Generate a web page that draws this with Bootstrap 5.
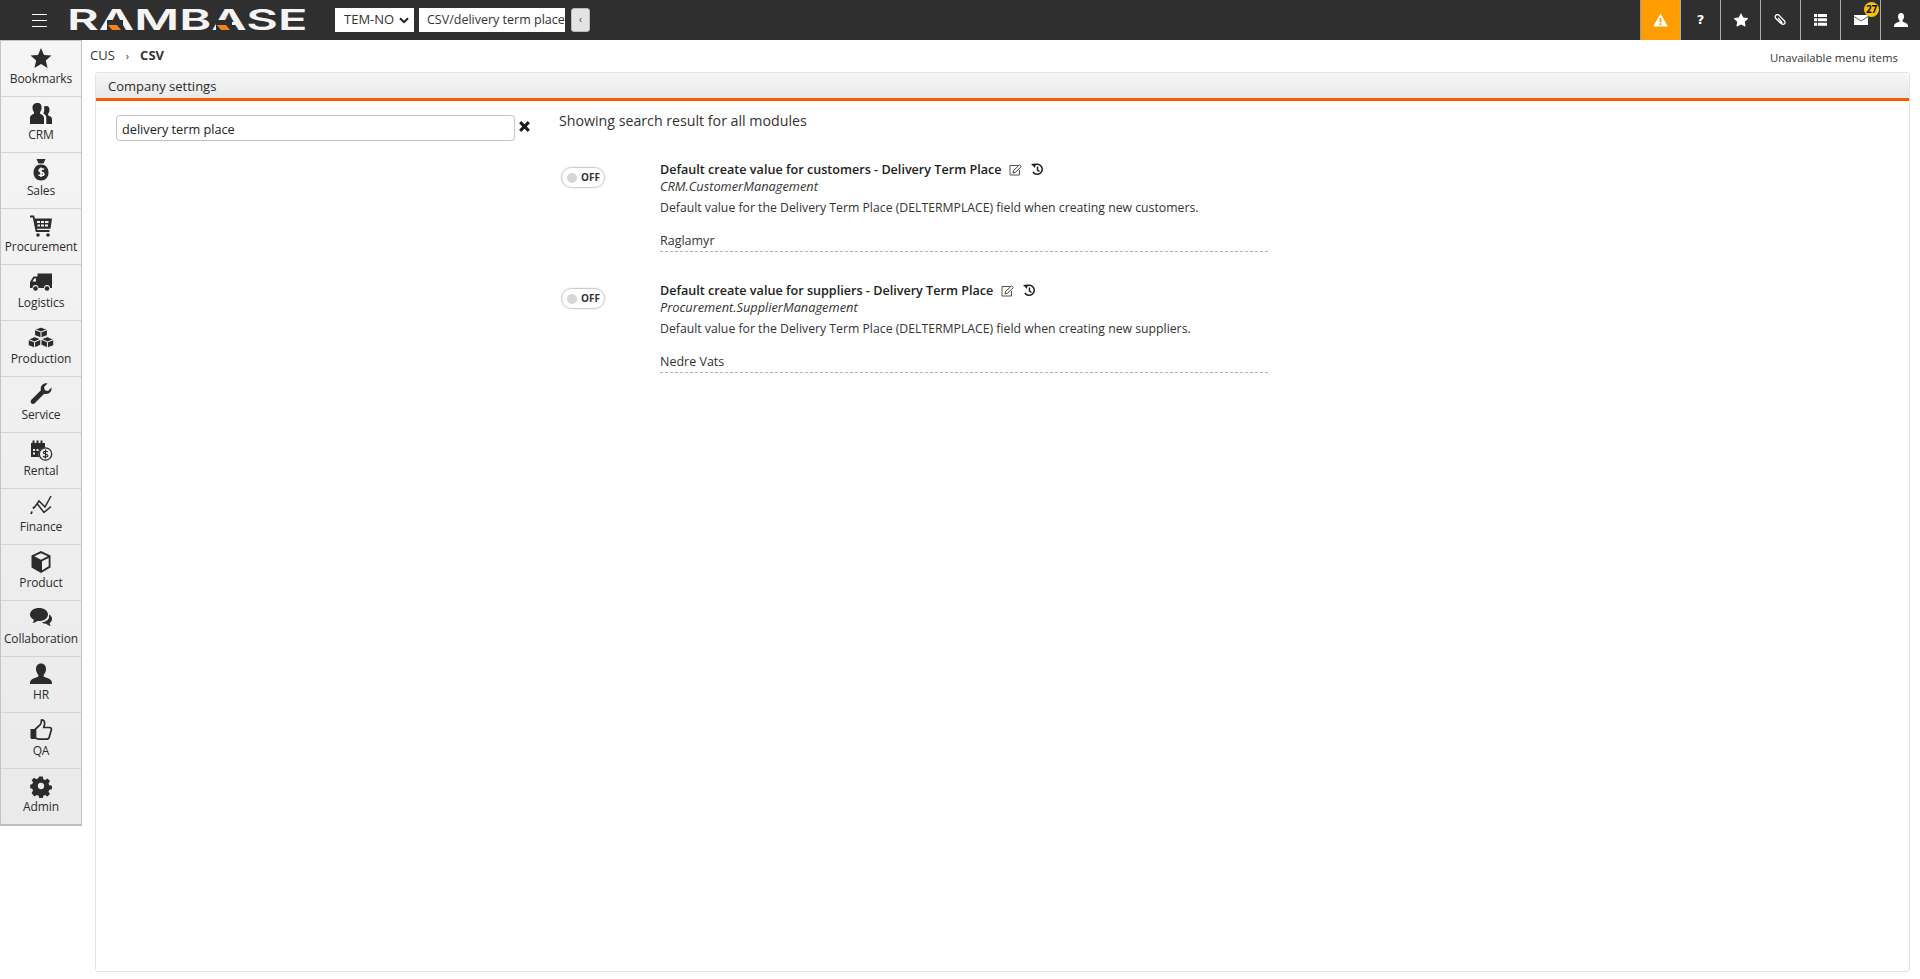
<!DOCTYPE html>
<html lang="en">
<head>
<meta charset="utf-8">
<title>RamBase</title>
<link href="https://cdn.jsdelivr.net/npm/bootstrap@5.3.0/dist/css/bootstrap.min.css" rel="stylesheet">
<style>
html,body{height:100%;overflow:hidden}
body{font-family:"Open Sans","Noto Sans",sans-serif;font-size:13px;color:#2b2b2b;background:#fff}
.shell{height:979px}
.topbar{height:40px;background:#2f2f2f;flex:none}
.burger{width:15px;margin-left:32px;margin-right:20px;flex:none}
.burger span{display:block;height:1px;background:#fff;margin-bottom:5px}
.burger span:last-child{margin-bottom:0}
.brand{position:relative;width:239px;height:22px;flex:none}
.brand-word{display:block;font-family:"Inter",sans-serif;font-weight:600;font-size:29px;line-height:22px;color:#f4f4f4;transform-origin:0 50%;transform:scaleX(1.68);white-space:nowrap}
.brand-mark{position:absolute;top:11px;width:16px;height:10px;background:#2f2f2f}
.brand-mark::after{content:"";position:absolute;left:3px;top:5px;width:9px;height:5px;background:#f58220;transform:skewX(40deg)}
.tenant{width:79px;height:24px;margin-left:29px;background:#fff;font-size:13px;color:#333;padding:0 0 0 9px;display:flex;align-items:center;justify-content:space-between;flex:none}
.tenant svg{margin-right:5px}
.crumbbox{width:146px;height:24px;margin-left:5px;background:#fff;color:#333;font-size:12.5px;padding-left:8px;line-height:24px;overflow:hidden;white-space:nowrap;flex:none}
.collapse-btn{width:19px;height:24px;margin-left:6px;background:#e4e4e4;border:1px solid #bbb;border-radius:3px;color:#444;font-size:10px;line-height:20px;text-align:center;flex:none}
.tool{width:40px;height:40px;border-left:1px solid #b0aaa6;display:flex;align-items:center;justify-content:center;position:relative;flex:none}
.tool-alert{background:#ff9d00;border-left-color:#999}
.tool-badge{position:absolute;top:2px;left:23px;width:15px;height:15px;border-radius:50%;background:#f4c20d;color:#111;font-size:10px;font-weight:700;line-height:15px;text-align:center;letter-spacing:-.3px}
.sidenav{width:82px;flex:none;align-self:flex-start;background:linear-gradient(#f5f5f5,#eaeaea);border-top:1px solid #c4c4c4;border-left:1px solid #c4c4c4;border-right:1px solid #c4c4c4;border-bottom:2px solid #bdbdbd}
.sideitem{height:56px;display:flex;flex-direction:column;align-items:center;color:#2b2b2b;font-size:12px;line-height:16px;padding-top:5px;border-bottom:1px solid #d4d4d4;text-decoration:none;letter-spacing:-.1px}
.sideitem:last-child{border-bottom:0;height:55px}
.sideitem svg{width:24px;height:24px;flex:none;margin-bottom:1px}
.sideitem svg.widen{width:28px}
.workspace{min-width:0}
.crumbs{height:32px;padding:6px 22px 0 8px;font-size:13px;color:#333}
.crumbs .sep{margin:0 11px;font-size:11px}
.crumbs .other{font-size:11.4px;margin-top:3px}
.panel{margin:0 10px 7px 13px;border:1px solid #e4e4e4;border-radius:3px;height:900px}
.panel-head{height:28px;background:linear-gradient(#f6f6f6,#e9e9e9);border-bottom:3px solid #f55b00;padding:4px 12px;font-size:13px;color:#2b2b2b;line-height:19px;border-radius:3px 3px 0 0}
.searchcol{width:463px;padding:14px 0 0 20px;flex:none}
.searchbox{width:399px;height:26px;border:1px solid #c2c2c2;border-radius:4px;padding:0 5px;font-size:12.7px;line-height:26px;color:#222}
.clearx{margin-left:3px;margin-top:5px}
.results{padding-top:10px;min-width:0}
.results-title{font-size:14.2px;line-height:20px;color:#333;margin-bottom:30px}
.setting{margin-bottom:30px}
.switcher{width:44px;height:21px;border:1px solid #ccc;border-radius:11px;margin:6px 0 0 2px;flex:none;display:flex;align-items:center;padding-left:5px;gap:4px;font-size:10px;font-weight:700;color:#333;box-shadow:0 0 2px #ddd}
.switcher i{display:block;width:10px;height:10px;border-radius:50%;background:#d6d6d6}
.setting-body{margin-left:55px;width:608px}
.setting-title{font-weight:600;font-size:12.6px;line-height:17px;color:#222}
.setting-title svg{margin-left:4px;vertical-align:-2px}
.setting-title svg.redo{margin-left:6px}
.setting-mod{font-style:italic;font-size:12.8px;line-height:17px;color:#333}
.setting-desc{font-size:12.25px;line-height:17px;color:#333;margin-top:4px}
.setting-val{font-size:12.5px;line-height:19px;color:#333;margin-top:15px;border-bottom:1px dashed #b0b0b0;height:21px}
</style>
</head>
<body>
<div class="shell d-flex flex-column">
  <header class="topbar d-flex align-items-center">
    <div class="burger"><span></span><span></span><span></span></div>
    <div class="brand">
      <span class="brand-word">RAMBASE</span>
      <i class="brand-mark" style="left:40px"></i>
      <i class="brand-mark" style="left:149px"></i>
    </div>
    <div class="tenant"><span>TEM-NO</span><svg width="10" height="7" viewBox="0 0 10 7"><path d="M1 1.2l4 4 4-4" fill="none" stroke="#222" stroke-width="2"/></svg></div>
    <div class="crumbbox">CSV/delivery term place</div>
    <div class="collapse-btn">&#8249;</div>
    <div class="ms-auto d-flex">
      <div class="tool tool-alert"><svg width="15" height="14" viewBox="0 0 16 15"><path fill-rule="evenodd" fill="#fff" d="M8 0.5 15.8 14.5H0.2zM7 5v5h2V5zM7 11v2h2v-2z"/></svg></div>
      <div class="tool"><span class="text-white fw-bold" style="font-size:13px;font-family:'DejaVu Sans',sans-serif">?</span></div>
      <div class="tool"><svg width="14" height="14" viewBox="0 0 16 16"><path fill="#fff" d="M3.612 15.443c-.386.198-.824-.149-.746-.592l.83-4.73L.173 6.765c-.329-.314-.158-.888.283-.95l4.898-.696L7.538.792c.197-.39.73-.39.927 0l2.184 4.327 4.898.696c.441.062.612.636.282.95l-3.522 3.356.83 4.73c.078.443-.36.79-.746.592L8 13.187l-4.389 2.256z"/></svg></div>
      <div class="tool"><svg width="13" height="13" viewBox="0 0 14 14"><path d="M3 5.500 7.500 10c1 1 2.800 1.500 3.800.6s.7-2.400-.2-3.300L5.500 1.500C4.500.5 2.900.5 2 1.400s-1 2.400 0 3.400L7 9.800c.5.500 1.100.5 1.400.2s.3-.9-.2-1.400L4.500 4.300" fill="none" stroke="#fff" stroke-width="1.400"/></svg></div>
      <div class="tool"><svg width="13" height="12" viewBox="0 0 13 12"><path fill="#fff" d="M0 0h3v3H0zM3.800 0H13v3H3.800zM0 4.300h3v3H0zM3.800 4.300H13v3H3.800zM0 8.700h3v3H0zM3.800 8.700H13v3H3.800z"/></svg></div>
      <div class="tool"><svg width="14" height="10" viewBox="0 0 14 10"><path fill="#fff" d="M0 0h14v10H0z"/><path fill="none" stroke="#2f2f2f" stroke-width=".8" d="M0 1.500 7 6l7-4.500"/></svg><span class="tool-badge">27</span></div>
      <div class="tool"><svg width="14" height="14" viewBox="0 0 14 14"><path fill="#fff" d="M7 0c2 0 3 1.500 3 3.500 0 1.500-.6 3-1.500 3.800v1.200C10 9.500 14 10 14 13v1H0v-1c0-3 4-3.500 5.500-4.500V7.300C4.600 6.500 4 5 4 3.500 4 1.500 5 0 7 0z"/></svg></div>
    </div>
  </header>
  <div class="d-flex flex-grow-1" style="min-height:0">
    <nav class="sidenav">
      <a class="sideitem"><svg viewBox="0 0 24 24"><path fill="#2b2b2b" d="M12 2l3 7 7.500.6-5.700 4.900 1.800 7.400L12 18l-6.600 3.900 1.800-7.400L1.500 9.600 9 9z"/></svg>Bookmarks</a>
      <a class="sideitem"><svg viewBox="0 0 24 24"><path fill="#2b2b2b" d="M9 1c2.500 0 3.600 2 3.600 4.500 0 2-.7 3.700-1.600 4.600v1.500c1.500 1.200 4 1.700 4 4.500V22H1v-5.900c0-2.800 2.500-3.300 4-4.500v-1.500C4.100 9.200 3.500 7.500 3.500 5.500 3.500 3 5 1 9 1zM17.500 4c2 0 3 1.700 3 3.700 0 1.700-.6 3.200-1.400 4v1.500c1.300 1 3.900 1.400 3.900 3.800V22h-5.700v-6c0-2.500-1.700-3.500-3-4.400 .8-1.500 1-3 1-4.500 0-1.100-.2-2-.5-2.500.6-.4 1.700-.6 2.700-.6z"/></svg>CRM</a>
      <a class="sideitem"><svg viewBox="0 0 24 24"><path fill="#2b2b2b" d="M7.500 1h9l-2 4.500h-5z"/><path fill="#2b2b2b" fill-rule="evenodd" d="M12 6.500c4.500 0 7.500 3.500 7.500 8s-3 8-7.500 8-7.500-3.500-7.500-8 3-8 7.500-8z"/><path fill="none" stroke="#fff" stroke-width="1.500" d="M15 11.500c-.8-1-4.500-1.500-5 .6-.4 2.200 5 1.400 5 3.900 0 2-4 2-5.500.7M12 9.500v9.500"/></svg>Sales</a>
      <a class="sideitem"><svg viewBox="0 0 24 24"><path fill="none" stroke="#2b2b2b" stroke-width="1.800" d="M1 2.500h3.500L7.500 17h13"/><path fill="#2b2b2b" d="M5.500 4.500H23l-1.500 10.300H7.500zM8 7v2h3V7zM12 7v2h3V7zM16 7v2h3.500V7zM8.500 10.500v2H11v-2zM12 10.500v2h3v-2zM16 10.500v2h3v-2z" fill-rule="evenodd"/><circle cx="9" cy="21" r="1.800" fill="#2b2b2b"/><circle cx="19" cy="21" r="1.800" fill="#2b2b2b"/></svg>Procurement</a>
      <a class="sideitem"><svg viewBox="0 0 24 24"><path fill="#2b2b2b" fill-rule="evenodd" d="M8.500 3.500H23V18h-2a3 3 0 0 0-6 0H9.500a3 3 0 0 0-6 0H1v-6l3.500-5.500h4zM3.500 11.500H7V8.500H5.200z"/><circle cx="6.500" cy="18.500" r="2.300" fill="#2b2b2b"/><circle cx="18" cy="18.500" r="2.300" fill="#2b2b2b"/></svg>Logistics</a>
      <a class="sideitem"><svg class="widen" viewBox="0 0 24 24" preserveAspectRatio="none"><g stroke="#f0f0f0" stroke-width=".9" fill="#2b2b2b"><path d="M12 1l5.500 2.500v6L12 12 6.500 9.500v-6z"/><path d="M6.500 10.500 12 13v6l-5.500 3L1 19.500v-6z"/><path d="M17.500 10.500 23 13.500v6L17.500 22 12 19v-6z"/><path fill="none" d="M6.500 3.500 12 6l5.500-2.500M12 6v6M1 13.500l5.500 2.500 5.500-3M6.500 16v6M12 13l5.500 3 5.500-2.500M17.500 16v6"/></g></svg>Production</a>
      <a class="sideitem"><svg viewBox="0 0 24 24"><path fill="#2b2b2b" d="M22.500 5.500c.5 3-1.500 6.500-5.500 6.500-.8 0-1.300-.1-1.800-.3L6 21c-1.200 1.200-2.800 1.200-3.700.3s-.9-2.500.3-3.700l9.300-9.300c-.3-1-.3-2-.1-2.800C12.500 2.500 15.500.8 18.500 1.500l-3.500 3.500.8 3.300 3.200.7z"/></svg>Service</a>
      <a class="sideitem"><svg viewBox="0 0 24 24"><path fill="#2b2b2b" d="M2 5h1.500V2.500h2V5h2V2.500h2V5h2V2.500h2V5H16v4.500a7 7 0 0 0-6 9.500H2zM4 11h2v2H4zM7.500 11h2v2h-2zM4 14.500h2v2H4z" fill-rule="evenodd"/><circle cx="16.500" cy="16" r="6.200" fill="none" stroke="#2b2b2b" stroke-width="1.300"/><path fill="none" stroke="#2b2b2b" stroke-width="1.200" d="M18.800 14c-.8-1-4.300-1.200-4.500.5-.2 2 4.700 1 4.600 3.300-.1 1.500-3.600 1.500-4.900.4M16.500 11.500v9"/></svg>Rental</a>
      <a class="sideitem"><svg viewBox="0 0 24 24"><path fill="none" stroke="#2b2b2b" stroke-width="1.500" d="M5 14 10 7l6 6 6-11M8 9.500l7 9 7-6"/><path fill="none" stroke="#2b2b2b" stroke-width="1.800" d="M2 20l1-2.500M4 14.500 5 13"/></svg>Finance</a>
      <a class="sideitem"><svg viewBox="0 0 24 24"><path fill="#2b2b2b" fill-rule="evenodd" d="M12 1l9.500 4.500v12L12 23l-9.500-5.500v-12zM12 3.200 5.300 6.300 12 9.700l6.700-3.400zM13 11.300v8.900l6.700-3.900V8z"/></svg>Product</a>
      <a class="sideitem"><svg viewBox="0 0 24 24"><path fill="#2b2b2b" d="M10 2c5 0 9 2.700 9 6.500S15 15 10 15c-.7 0-1.200 0-1.800-.1C7 16 5.500 16.700 3.500 17c.8-.9 1.300-2 1.400-3.200C2.600 12.700 1 10.800 1 8.500 1 4.700 5 2 10 2z"/><path fill="#2b2b2b" d="M20 8.500c2 1 3 2.500 3 4.500 0 1.700-1 3.200-2.300 4 0 1.300.5 2.300 1.300 3-2-.2-3.500-1-4.500-2.300-1.800 0-3.400-.5-4.500-1.500 4.500-.3 8-3 7-7.700z"/></svg>Collaboration</a>
      <a class="sideitem"><svg viewBox="0 0 24 24"><path fill="#2b2b2b" d="M12 1.500c3.300 0 5 2.400 5 5.500 0 2.300-1 4.500-2.300 5.700v1.800c2 1.300 8.300 2 8.300 6.500v1H1v-1c0-4.500 6.300-5.200 8.300-6.500v-1.800C8 11.500 7 9.300 7 7c0-3.100 1.700-5.500 5-5.500z"/></svg>HR</a>
      <a class="sideitem"><svg viewBox="0 0 24 24"><path fill="#2b2b2b" d="M1.500 11H6v10H3c-1 0-1.500-.6-1.500-1.500z"/><path fill="none" stroke="#2b2b2b" stroke-width="1.700" d="M6.500 11 11 7c1.200-1.500 1.500-3 1.500-5 2.500-.5 3.500 2 3 4.500l-.7 3h5.700c1.500 0 2.200 1.200 1.800 2.500l-2 7c-.4 1.500-1.200 2.200-2.800 2.200H10c-1.500 0-2.500-.7-3.500-1.200z"/></svg>QA</a>
      <a class="sideitem"><svg viewBox="0 0 24 24"><path fill="#2b2b2b" fill-rule="evenodd" d="M10 1.500h4l.6 3 2 .9 2.600-1.700 2.800 2.800-1.700 2.600.9 2 3 .6v4l-3 .6-.9 2 1.700 2.600-2.800 2.800-2.600-1.700-2 .9-.6 2.600h-4l-.6-2.600-2-.9-2.600 1.700L1.500 19.700l1.700-2.600-.9-2-2.300-.6v-4l2.300-.6.900-2L1.500 5.500l2.800-2.800 2.600 1.700 2-.9zM12 8.500a3.500 3.500 0 1 0 0 7 3.500 3.500 0 0 0 0-7z" transform="translate(1.200 1.200) scale(.9)"/></svg>Admin</a>
    </nav>
    <main class="workspace flex-grow-1 d-flex flex-column">
      <div class="crumbs d-flex justify-content-between">
        <div><span>CUS</span><span class="sep">&#8250;</span><strong>CSV</strong></div>
        <div class="other">Unavailable menu items</div>
      </div>
      <section class="panel">
        <div class="panel-head">Company settings</div>
        <div class="d-flex">
          <div class="searchcol d-flex align-items-start">
            <div class="searchbox">delivery term place</div>
            <svg class="clearx" width="13" height="13" viewBox="0 0 12 12"><path d="M2 2l8 8M10 2l-8 8" stroke="#1c1c1c" stroke-width="2.800"/></svg>
          </div>
          <div class="results">
            <div class="results-title">Showing search result for all modules</div>
            <div class="setting d-flex">
              <div class="switcher"><i></i>OFF</div>
              <div class="setting-body">
                <div class="setting-title">Default create value for customers - Delivery Term Place
                  <svg width="13" height="12" viewBox="0 0 13 12"><path fill="none" stroke="#555" d="M9 1.500H1v9.500h9.500V6"/><path fill="none" stroke="#444" d="M4.500 6.500 10.500.8l1.800 1.800-6 5.900-2.200.4z"/></svg>
                  <svg class="redo" width="13" height="13" viewBox="0 0 13 13"><path fill="none" stroke="#222" stroke-width="1.500" d="M3 2.500a5 5 0 1 1-1 6.500M6.500 3.500V7l2 1.500"/><path fill="#222" d="M0 1l4.500-.5L4 5z"/></svg>
                </div>
                <div class="setting-mod">CRM.CustomerManagement</div>
                <div class="setting-desc">Default value for the Delivery Term Place (DELTERMPLACE) field when creating new customers.</div>
                <div class="setting-val">Raglamyr</div>
              </div>
            </div>
            <div class="setting d-flex">
              <div class="switcher"><i></i>OFF</div>
              <div class="setting-body">
                <div class="setting-title">Default create value for suppliers - Delivery Term Place
                  <svg width="13" height="12" viewBox="0 0 13 12"><path fill="none" stroke="#555" d="M9 1.500H1v9.500h9.500V6"/><path fill="none" stroke="#444" d="M4.500 6.500 10.500.8l1.800 1.800-6 5.900-2.200.4z"/></svg>
                  <svg class="redo" width="13" height="13" viewBox="0 0 13 13"><path fill="none" stroke="#222" stroke-width="1.500" d="M3 2.500a5 5 0 1 1-1 6.500M6.500 3.500V7l2 1.500"/><path fill="#222" d="M0 1l4.500-.5L4 5z"/></svg>
                </div>
                <div class="setting-mod">Procurement.SupplierManagement</div>
                <div class="setting-desc">Default value for the Delivery Term Place (DELTERMPLACE) field when creating new suppliers.</div>
                <div class="setting-val">Nedre Vats</div>
              </div>
            </div>
          </div>
        </div>
      </section>
    </main>
  </div>
</div>
<script src="https://cdn.jsdelivr.net/npm/bootstrap@5.3.0/dist/js/bootstrap.bundle.min.js"></script>
</body>
</html>
